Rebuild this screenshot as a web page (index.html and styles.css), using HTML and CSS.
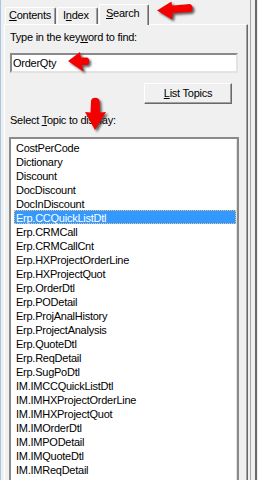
FILE: index.html
```html
<!DOCTYPE html>
<html>
<head>
<meta charset="utf-8">
<link rel="stylesheet" href="styles.css">
</head>
<body>
<div class="win">
  <div class="edge"></div>
  <div class="main">
    <div class="tabs">
      <div class="tab tab-contents"><u>C</u>ontents</div>
      <div class="tab tab-index">I<u>n</u>dex</div>
      <div class="tab tab-search active"><u>S</u>earch</div>
    </div>
    <div class="panel">
      <div class="label">Type in the key<u>w</u>ord to find:</div>
      <div class="input">OrderQty</div>
      <div class="btn-row"><div class="btn"><u>L</u>ist Topics</div></div>
      <div class="label label2">Select <u>T</u>opic to display:</div>
      <div class="listbox">
        <div class="item">CostPerCode</div>
        <div class="item">Dictionary</div>
        <div class="item">Discount</div>
        <div class="item">DocDiscount</div>
        <div class="item">DocInDiscount</div>
        <div class="item selected">Erp.CCQuickListDtl</div>
        <div class="item">Erp.CRMCall</div>
        <div class="item">Erp.CRMCallCnt</div>
        <div class="item">Erp.HXProjectOrderLine</div>
        <div class="item">Erp.HXProjectQuot</div>
        <div class="item">Erp.OrderDtl</div>
        <div class="item">Erp.PODetail</div>
        <div class="item">Erp.ProjAnalHistory</div>
        <div class="item">Erp.ProjectAnalysis</div>
        <div class="item">Erp.QuoteDtl</div>
        <div class="item">Erp.ReqDetail</div>
        <div class="item">Erp.SugPoDtl</div>
        <div class="item">IM.IMCCQuickListDtl</div>
        <div class="item">IM.IMHXProjectOrderLine</div>
        <div class="item">IM.IMHXProjectQuot</div>
        <div class="item">IM.IMOrderDtl</div>
        <div class="item">IM.IMPODetail</div>
        <div class="item">IM.IMQuoteDtl</div>
        <div class="item">IM.IMReqDetail</div>
        <div class="item">InDiscount</div>
      </div>
    </div>
  </div>
  <div class="side"><div class="bar"></div></div>
</div>
<svg class="arrows" width="258" height="480" viewBox="0 0 258 480" xmlns="http://www.w3.org/2000/svg">
  <defs>
    <filter id="sh" x="-30%" y="-30%" width="160%" height="160%">
      <feGaussianBlur stdDeviation="1"/>
    </filter>
  </defs>
  <g transform="translate(2,2)" fill="#303030" opacity="0.75" filter="url(#sh)">
    <path d="M157 10.5 L171.5 1.5 L172 5.5 C178 5 184 4.5 189 4 C193.5 4 194 11.5 190 12 L173 13 L172 19.5 Z"/>
    <path d="M68 61 L80 52 L81 57.5 L87 57.5 C90 58 90 64.5 87 65 L82 65 L83.5 71.5 Z"/>
    <path d="M95 130 L85 112 L90.5 112.5 L91 101 C91 96.5 99.5 96.5 99.5 101 L100 112.5 L106 112 Z"/>
  </g>
  <g fill="#f50000">
    <path d="M157 10.5 L171.5 1.5 L172 5.5 C178 5 184 4.5 189 4 C193.5 4 194 11.5 190 12 L173 13 L172 19.5 Z"/>
    <path d="M68 61 L80 52 L81 57.5 L87 57.5 C90 58 90 64.5 87 65 L82 65 L83.5 71.5 Z"/>
    <path d="M95 130 L85 112 L90.5 112.5 L91 101 C91 96.5 99.5 96.5 99.5 101 L100 112.5 L106 112 Z"/>
  </g>
</svg>
</body>
</html>
```

FILE: styles.css
```css
html, body {
  margin: 0;
  padding: 0;
}
body {
  width: 258px;
  height: 480px;
  overflow: hidden;
  background: #f0f0f0;
  font-family: "Liberation Sans", Arial, sans-serif;
  font-size: 11px;
  letter-spacing: -0.25px;
  color: #000;
  position: relative;
}
u {
  text-decoration: underline;
  text-underline-offset: 1px;
}
.win {
  display: flex;
  height: 480px;
}
.edge {
  width: 1px;
  background: #a9c5e6;
}
.main {
  width: 247px;
  box-sizing: border-box;
  padding-left: 3px;
  display: flex;
  flex-direction: column;
}
.tabs {
  height: 24px;
  display: flex;
  align-items: flex-end;
  padding-left: 1px;
  position: relative;
  z-index: 1;
}
.tab {
  box-sizing: border-box;
  height: 17px;
  line-height: 13px;
  padding: 1px 4px 0 3px;
  border-left: 1px solid #fff;
  border-top: 1px solid #fff;
  border-right: 1px solid #696969;
  box-shadow: inset -1px 0 #a0a0a0;
  border-top-left-radius: 2px;
  border-top-right-radius: 2px;
  margin-right: 1px;
  white-space: nowrap;
}
.tab-contents { width: 51px; }
.tab-index { width: 41px; padding-left: 5px; }
.tab.active {
  height: 21px;
  width: 50px;
  margin-bottom: -1px;
  padding: 2px 4px 0 6px;
  background: #f0f0f0;
}
.panel {
  flex: 1;
  border-left: 1px solid #fff;
  border-top: 1px solid #fff;
  border-right: 1px solid #696969;
  box-shadow: inset -1px 0 #a0a0a0;
  padding: 6px 0 0 5px;
  display: flex;
  flex-direction: column;
  min-height: 0;
}
.label {
  line-height: 13px;
  white-space: nowrap;
}
.input {
  margin-top: 9px;
  width: 228px;
  height: 20px;
  box-sizing: border-box;
  background: #fff;
  border-top: 2px solid #8a8a8a;
  border-left: 2px solid #8a8a8a;
  border-right: 2px solid #e3e3e3;
  border-bottom: 2px solid #e3e3e3;
  padding: 2px 0 0 1px;
  line-height: 13px;
}
.btn-row {
  margin-top: 10px;
  display: flex;
}
.btn {
  margin-left: 134px;
  width: 88px;
  height: 21px;
  box-sizing: border-box;
  border-top: 1px solid #fff;
  border-left: 1px solid #fff;
  border-right: 1px solid #696969;
  border-bottom: 1px solid #696969;
  box-shadow: inset -1px -1px #a0a0a0;
  text-align: center;
  line-height: 18px;
}
.label2 {
  margin-top: 10px;
}
.listbox {
  margin-top: 10px;
  margin-left: -1px;
  width: 230px;
  flex: 1;
  min-height: 0;
  overflow: hidden;
  box-sizing: border-box;
  background: #fff;
  border-top: 2px solid #8a8a8a;
  border-left: 2px solid #8a8a8a;
  border-right: 2px solid #8a8a8a;
  box-shadow: inset -1px 0 #e3e3e3;
  padding: 1px 1px 0 3px;
}
.item {
  height: 14px;
  box-sizing: border-box;
  padding: 2px 0 0 2px;
  line-height: 12px;
  white-space: nowrap;
}
.item.selected {
  background: #3399ff;
  color: #fff;
  outline: 1px dotted #f0c080;
  outline-offset: -1px;
}
.side {
  flex: 1;
  box-sizing: border-box;
  padding-left: 2px;
}
.bar {
  height: 100%;
  width: 4px;
  border-left: 1px solid #a8a8a8;
  border-right: 2px solid #6a6a6a;
}
.arrows {
  position: absolute;
  left: 0;
  top: 0;
  pointer-events: none;
}
```
